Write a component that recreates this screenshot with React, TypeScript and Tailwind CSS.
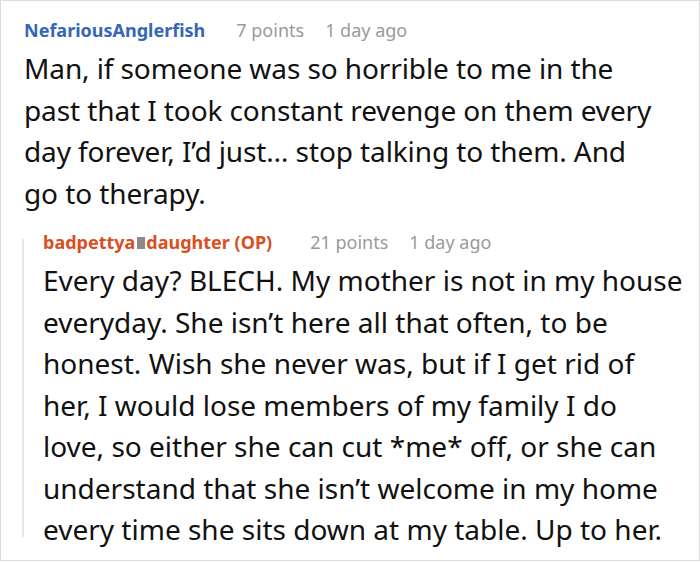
const L = ({ children }: { children: React.ReactNode }) => <span className="block whitespace-nowrap">{children}</span>;

export default function App() {
  return (
    <div className="w-[700px] h-[561px] border border-[#dcdcdc] bg-white overflow-hidden" style={{ fontFamily: '"Noto Sans", "Open Sans", sans-serif' }}>
      <div className="pl-[23px] pr-4 pt-[16px]">
        <div className="flex items-baseline text-[18px] leading-[26px]">
          <span className="font-bold text-[#3566b8]">NefariousAnglerfish</span>
          <span className="ml-[31px] text-[#9a9a9a]">7 points</span>
          <span className="ml-[21px] text-[#9a9a9a]">1 day ago</span>
        </div>
        <p className="mt-[5px] text-[28px] leading-[41.5px] tracking-[-0.1px] text-[#111]">
          <L>Man, if someone was so horrible to me in the</L>
          <L>past that I took constant revenge on them every</L>
          <L>day forever, I’d just… stop talking to them. And</L>
          <L>go to therapy.</L>
        </p>
        <div className="mt-[15px] flex -ml-[2px]">
          <div className="w-[2px] bg-[#e6e6e6] mt-[10px] mb-[14px]" />
          <div className="pl-[19px] flex-1">
            <div className="flex items-center text-[18px] leading-[26px]">
              <span className="font-bold text-[#d94f1e] flex items-center">
                badpettya<span className="inline-block w-[8px] h-[12px] bg-[#8a8a8a] mt-[1px] ml-[2px] mr-[1px]" />daughter (OP)
              </span>
              <span className="ml-[38px] text-[#9a9a9a]">21 points</span>
              <span className="ml-[21px] text-[#9a9a9a]">1 day ago</span>
            </div>
            <p className="mt-[5px] text-[28px] leading-[41.5px] text-[#111]">
              <L>Every day? BLECH. My mother is not in my house</L>
              <L>everyday. She isn’t here all that often, to be</L>
              <L>honest. Wish she never was, but if I get rid of</L>
              <L>her, I would lose members of my family I do</L>
              <L>love, so either she can cut *me* off, or she can</L>
              <L>understand that she isn’t welcome in my home</L>
              <L>every time she sits down at my table. Up to her.</L>
            </p>
          </div>
        </div>
      </div>
    </div>
  );
}
